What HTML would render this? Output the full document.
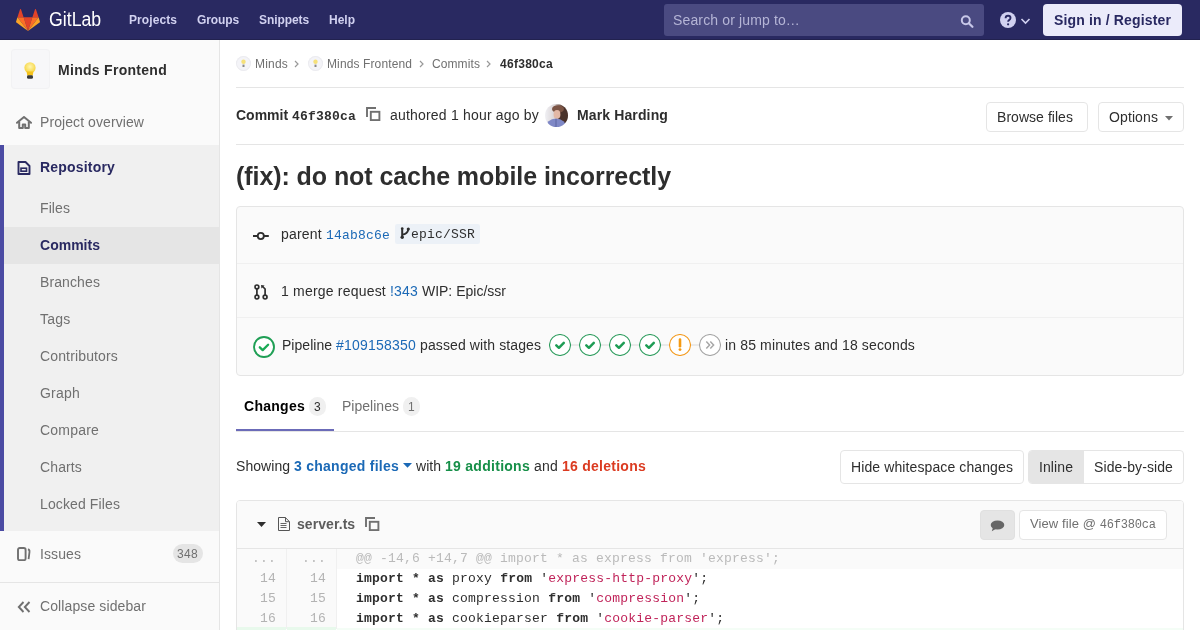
<!DOCTYPE html>
<html><head><meta charset="utf-8">
<style>
*{box-sizing:border-box;margin:0;padding:0}
html,body{width:1200px;height:630px;overflow:hidden;background:#fff;font-family:"Liberation Sans",sans-serif;font-size:14px;color:#2e2e2e}
.a{position:absolute;white-space:pre;font-size:0}
</style></head><body><div style="position:absolute;left:0;top:0;width:1200px;height:630px;will-change:transform">
<div class="a" style="left:0px;top:0px;width:1200px;height:40px;background:#292961"></div><div class="a" style="left:0px;top:39px;width:1200px;height:1px;background:#22224f"></div><svg class="a" style="left:16px;top:8px" width="24" height="23" viewBox="0 0 36 34.6"><path fill="#e24329" d="M18 34.5l6.6-20.4H11.4z"/><path fill="#fc6d26" d="M18 34.5l-6.6-20.4H2.1z"/><path fill="#fca326" d="M2.1 14.1l-2 6.2a1.4 1.4 0 0 0 .5 1.5L18 34.5z"/><path fill="#e24329" d="M2.1 14.1h9.3L7.4 1.8a.7.7 0 0 0-1.3 0z"/><path fill="#fc6d26" d="M18 34.5l6.6-20.4h9.3z"/><path fill="#fca326" d="M33.9 14.1l2 6.2a1.4 1.4 0 0 1-.5 1.5L18 34.5z"/><path fill="#e24329" d="M33.9 14.1h-9.3l4-12.3a.7.7 0 0 1 1.3 0z"/></svg><div class="a" style="left:49px;top:8px;transform:scaleX(0.885);transform-origin:0 0"><span style='font-family:"Liberation Sans",sans-serif;font-size:20px;font-weight:normal;letter-spacing:0.012px;color:#fff;'>GitLab</span></div><div class="a" style="left:129px;top:13px;"><span style='font-family:"Liberation Sans",sans-serif;font-size:12px;font-weight:bold;letter-spacing:0.081px;color:#d1d1f0;'>Projects</span></div><div class="a" style="left:197px;top:13px;"><span style='font-family:"Liberation Sans",sans-serif;font-size:12px;font-weight:bold;letter-spacing:-0.111px;color:#d1d1f0;'>Groups</span></div><div class="a" style="left:259px;top:13px;"><span style='font-family:"Liberation Sans",sans-serif;font-size:12px;font-weight:bold;letter-spacing:-0.084px;color:#d1d1f0;'>Snippets</span></div><div class="a" style="left:329px;top:13px;"><span style='font-family:"Liberation Sans",sans-serif;font-size:12px;font-weight:bold;letter-spacing:-0.001px;color:#d1d1f0;'>Help</span></div><div class="a" style="left:664px;top:4px;width:320px;height:32px;background:#4a4a81;border-radius:3px"></div><div class="a" style="left:673px;top:12px;"><span style='font-family:"Liberation Sans",sans-serif;font-size:14px;font-weight:normal;letter-spacing:0.139px;color:#b5b5d6;'>Search or jump to…</span></div><svg class="a" style="left:960px;top:15px" width="14" height="13" viewBox="0 0 14 13"><circle cx="5.8" cy="5.2" r="4" fill="none" stroke="#c7c7e8" stroke-width="2"/><path d="M8.8 8.2l3.6 3.6" stroke="#c7c7e8" stroke-width="2.2" stroke-linecap="round"/></svg><svg class="a" style="left:1000px;top:12px" width="16" height="16" viewBox="0 0 16 16"><circle cx="8" cy="8" r="8" fill="#d1d1f0"/><path d="M5.6 6.2c0-1.5 1-2.4 2.5-2.4s2.4.9 2.4 2.2c0 1.1-.6 1.6-1.4 2.1-.6.4-.9.7-.9 1.4v.3" fill="none" stroke="#292961" stroke-width="1.9"/><circle cx="8.1" cy="12.3" r="1.1" fill="#292961"/></svg><svg class="a" style="left:1020px;top:17px" width="11" height="8" viewBox="0 0 11 8"><path d="M1.5 2l4 4 4-4" fill="none" stroke="#d1d1f0" stroke-width="1.6"/></svg><div class="a" style="left:1043px;top:4px;width:139px;height:32px;background:#ebebfa;border-radius:4px"></div><div class="a" style="left:1054px;top:12px;"><span style='font-family:"Liberation Sans",sans-serif;font-size:14px;font-weight:bold;letter-spacing:0.147px;color:#292961;'>Sign in / Register</span></div><div class="a" style="left:0px;top:40px;width:220px;height:590px;background:#fafafa;border-right:1px solid #e5e5e5"></div><div class="a" style="left:11px;top:49px;width:39px;height:40px;background:#f7f7f9;border-radius:4px;box-shadow:0 0 0 1px #f2f2f4 inset"></div><svg class="a" style="left:22px;top:61px" width="16" height="20" viewBox="0 0 16 20"><defs><radialGradient id="gl" cx="50%" cy="40%" r="60%"><stop offset="0" stop-color="#fff6b0"/><stop offset="1" stop-color="#f6d23a"/></radialGradient></defs><circle cx="8" cy="6.8" r="5.6" fill="url(#gl)"/><path d="M4.6 10.5h6.8l-.6 4H5.2z" fill="#f5c21b"/><rect x="5" y="14.2" width="6" height="3.6" rx="1.4" fill="#3a3a3a"/></svg><div class="a" style="left:58px;top:62px;"><span style='font-family:"Liberation Sans",sans-serif;font-size:14px;font-weight:bold;letter-spacing:0.287px;color:#2e2e2e;'>Minds Frontend</span></div><svg class="a" style="left:16px;top:116px" width="16" height="13" viewBox="0 0 16 13"><path d="M1 6.8L8 1l7 5.8" fill="none" stroke="#707070" stroke-width="2" stroke-linejoin="round" stroke-linecap="round"/><path d="M3.2 5.5V12h3.6V8.6h2.4V12h3.6V5.5" fill="none" stroke="#707070" stroke-width="2" stroke-linejoin="round"/></svg><div class="a" style="left:40px;top:114px;"><span style='font-family:"Liberation Sans",sans-serif;font-size:14px;font-weight:normal;letter-spacing:0.081px;color:#707070;'>Project overview</span></div><div class="a" style="left:0px;top:145px;width:219px;height:386px;background:#f0f0f0"></div><div class="a" style="left:0px;top:145px;width:4px;height:386px;background:#4b4ba3"></div><svg class="a" style="left:17px;top:161px" width="14" height="14" viewBox="0 0 14 14"><path d="M1.5 1h7l4 4v8H1.5z" fill="none" stroke="#292961" stroke-width="1.9" stroke-linejoin="round"/><rect x="4" y="7.2" width="5.5" height="3" fill="none" stroke="#292961" stroke-width="1.6"/></svg><div class="a" style="left:40px;top:159px;"><span style='font-family:"Liberation Sans",sans-serif;font-size:14px;font-weight:bold;letter-spacing:0.188px;color:#292961;'>Repository</span></div><div class="a" style="left:4px;top:227px;width:215px;height:37px;background:#e5e5e5"></div><div class="a" style="left:40px;top:200px;"><span style='font-family:"Liberation Sans",sans-serif;font-size:14px;font-weight:normal;letter-spacing:0.088px;color:#707070;'>Files</span></div><div class="a" style="left:40px;top:237px;"><span style='font-family:"Liberation Sans",sans-serif;font-size:14px;font-weight:bold;letter-spacing:0.015px;color:#292961;'>Commits</span></div><div class="a" style="left:40px;top:274px;"><span style='font-family:"Liberation Sans",sans-serif;font-size:14px;font-weight:normal;letter-spacing:0.107px;color:#707070;'>Branches</span></div><div class="a" style="left:40px;top:311px;"><span style='font-family:"Liberation Sans",sans-serif;font-size:14px;font-weight:normal;letter-spacing:0.219px;color:#707070;'>Tags</span></div><div class="a" style="left:40px;top:348px;"><span style='font-family:"Liberation Sans",sans-serif;font-size:14px;font-weight:normal;letter-spacing:0.145px;color:#707070;'>Contributors</span></div><div class="a" style="left:40px;top:385px;"><span style='font-family:"Liberation Sans",sans-serif;font-size:14px;font-weight:normal;letter-spacing:0.218px;color:#707070;'>Graph</span></div><div class="a" style="left:40px;top:422px;"><span style='font-family:"Liberation Sans",sans-serif;font-size:14px;font-weight:normal;letter-spacing:0.203px;color:#707070;'>Compare</span></div><div class="a" style="left:40px;top:459px;"><span style='font-family:"Liberation Sans",sans-serif;font-size:14px;font-weight:normal;letter-spacing:0.128px;color:#707070;'>Charts</span></div><div class="a" style="left:40px;top:496px;"><span style='font-family:"Liberation Sans",sans-serif;font-size:14px;font-weight:normal;letter-spacing:0.117px;color:#707070;'>Locked Files</span></div><svg class="a" style="left:16px;top:547px" width="15" height="14" viewBox="0 0 15 14"><rect x="2" y="1" width="7.6" height="12.2" rx="1.8" fill="none" stroke="#707070" stroke-width="1.9"/><path d="M11.9 2.4c1.3.2 1.8.9 1.6 2.4l-.9 7.4" fill="none" stroke="#707070" stroke-width="1.8"/></svg><div class="a" style="left:40px;top:546px;"><span style='font-family:"Liberation Sans",sans-serif;font-size:14px;font-weight:normal;letter-spacing:0.090px;color:#707070;'>Issues</span></div><div class="a" style="left:173px;top:544px;width:30px;height:19px;background:#e5e5e5;border-radius:10px"></div><div class="a" style="left:177px;top:547px;"><span style='font-family:"Liberation Sans",sans-serif;font-size:12px;font-weight:normal;letter-spacing:0.326px;color:#707070;'>348</span></div><div class="a" style="left:0px;top:582px;width:219px;height:1px;background:#e5e5e5"></div><svg class="a" style="left:17px;top:601px" width="14" height="12" viewBox="0 0 14 12"><path d="M6.5 1L1.8 6l4.7 5M12.5 1L7.8 6l4.7 5" fill="none" stroke="#707070" stroke-width="1.9"/></svg><div class="a" style="left:40px;top:598px;"><span style='font-family:"Liberation Sans",sans-serif;font-size:14px;font-weight:normal;letter-spacing:0.107px;color:#707070;'>Collapse sidebar</span></div><div class="a" style="left:236px;top:56px;width:15px;height:15px;background:#f4f4f8;border-radius:50%;box-shadow:0 0 0 1px #ececf0 inset"></div><svg class="a" style="left:241px;top:59px" width="5" height="9" viewBox="0 0 5 9"><circle cx="2.5" cy="2.8" r="2.2" fill="#f5e07a"/><rect x="1.5" y="5.6" width="2" height="2.4" fill="#8a8a8a"/></svg><div class="a" style="left:255px;top:57px;"><span style='font-family:"Liberation Sans",sans-serif;font-size:12px;font-weight:normal;letter-spacing:0.198px;color:#707070;'>Minds</span></div><svg class="a" style="left:294px;top:60px" width="5" height="8" viewBox="0 0 5 8"><path d="M1 1l3 3-3 3" fill="none" stroke="#999" stroke-width="1.2"/></svg><div class="a" style="left:308px;top:56px;width:15px;height:15px;background:#f4f4f8;border-radius:50%;box-shadow:0 0 0 1px #ececf0 inset"></div><svg class="a" style="left:313px;top:59px" width="5" height="9" viewBox="0 0 5 9"><circle cx="2.5" cy="2.8" r="2.2" fill="#f5e07a"/><rect x="1.5" y="5.6" width="2" height="2.4" fill="#8a8a8a"/></svg><div class="a" style="left:327px;top:57px;"><span style='font-family:"Liberation Sans",sans-serif;font-size:12px;font-weight:normal;letter-spacing:0.116px;color:#707070;'>Minds Frontend</span></div><svg class="a" style="left:419px;top:60px" width="5" height="8" viewBox="0 0 5 8"><path d="M1 1l3 3-3 3" fill="none" stroke="#999" stroke-width="1.2"/></svg><div class="a" style="left:432px;top:57px;"><span style='font-family:"Liberation Sans",sans-serif;font-size:12px;font-weight:normal;letter-spacing:0.095px;color:#707070;'>Commits</span></div><svg class="a" style="left:486px;top:60px" width="5" height="8" viewBox="0 0 5 8"><path d="M1 1l3 3-3 3" fill="none" stroke="#999" stroke-width="1.2"/></svg><div class="a" style="left:500px;top:57px;"><span style='font-family:"Liberation Sans",sans-serif;font-size:12px;font-weight:bold;letter-spacing:0.286px;color:#2e2e2e;'>46f380ca</span></div><div class="a" style="left:236px;top:87px;width:948px;height:1px;background:#e5e5e5"></div><div class="a" style="left:236px;top:107px;"><span style='font-family:"Liberation Sans",sans-serif;font-size:14px;font-weight:bold;letter-spacing:0.000px;'>Commit </span><span style='font-family:"Liberation Mono",monospace;font-size:13px;font-weight:bold;letter-spacing:0.199px;'>46f380ca</span></div><svg class="a" style="left:366px;top:107px" width="15" height="14" viewBox="0 0 15 14"><path d="M1 10V1h9" fill="none" stroke="#707070" stroke-width="1.9"/><rect x="4.8" y="4.8" width="8.6" height="8.3" fill="none" stroke="#707070" stroke-width="1.9"/></svg><div class="a" style="left:390px;top:107px;"><span style='font-family:"Liberation Sans",sans-serif;font-size:14px;font-weight:normal;letter-spacing:0.192px;color:#2e2e2e;'>authored 1 hour ago by</span></div><svg class="a" style="left:545px;top:104px" width="23" height="23" viewBox="0 0 23 23"><defs><clipPath id="av"><circle cx="11.5" cy="11.5" r="11.5"/></clipPath><linearGradient id="avbg" x1="0" x2="1" y1="0" y2="0"><stop offset="0" stop-color="#f0f0f4"/><stop offset="0.45" stop-color="#d8d2d4"/><stop offset="0.75" stop-color="#5a3e34"/><stop offset="1" stop-color="#2a1c18"/></linearGradient><filter id="avb" x="-10%" y="-10%" width="120%" height="120%"><feGaussianBlur stdDeviation="0.55"/></filter></defs><g clip-path="url(#av)"><g filter="url(#avb)"><rect width="23" height="23" fill="url(#avbg)"/><ellipse cx="17.5" cy="11" rx="5.5" ry="9" fill="#4a3029"/><ellipse cx="13" cy="5" rx="6" ry="3.8" fill="#7b5444"/><ellipse cx="12" cy="10.5" rx="3.4" ry="4.4" fill="#e2b8a6"/><ellipse cx="11" cy="23.5" rx="10.5" ry="9" fill="#7f88c6"/><path d="M11 15v8" stroke="#5c64a0" stroke-width="1"/></g></g></svg><div class="a" style="left:577px;top:107px;"><span style='font-family:"Liberation Sans",sans-serif;font-size:14px;font-weight:bold;letter-spacing:0.128px;color:#2e2e2e;'>Mark Harding</span></div><div class="a" style="left:986px;top:102px;width:102px;height:30px;background:#fff;border:1px solid #e5e5e5;border-radius:4px"></div><div class="a" style="left:997px;top:109px;"><span style='font-family:"Liberation Sans",sans-serif;font-size:14px;font-weight:normal;letter-spacing:0.044px;color:#2e2e2e;'>Browse files</span></div><div class="a" style="left:1098px;top:102px;width:86px;height:30px;background:#fff;border:1px solid #e5e5e5;border-radius:4px"></div><div class="a" style="left:1109px;top:109px;"><span style='font-family:"Liberation Sans",sans-serif;font-size:14px;font-weight:normal;letter-spacing:0.107px;color:#2e2e2e;'>Options</span></div><svg class="a" style="left:1165px;top:116px" width="8" height="5" viewBox="0 0 8 5"><path d="M0 0h8L4 4.5z" fill="#707070"/></svg><div class="a" style="left:236px;top:144px;width:948px;height:1px;background:#e5e5e5"></div><div class="a" style="left:236px;top:162px;"><span style='font-family:"Liberation Sans",sans-serif;font-size:25px;font-weight:bold;letter-spacing:-0.068px;color:#2e2e2e;'>(fix): do not cache mobile incorrectly</span></div><div class="a" style="left:236px;top:206px;width:948px;height:170px;background:#fafafa;border:1px solid #e5e5e5;border-radius:4px"></div><div class="a" style="left:237px;top:263px;width:946px;height:1px;background:#f0f0f0"></div><div class="a" style="left:237px;top:317px;width:946px;height:1px;background:#f0f0f0"></div><svg class="a" style="left:252px;top:230px" width="18" height="12" viewBox="0 0 18 12"><path d="M1 6H5.8M11.8 6H16.8" stroke="#2e2e2e" stroke-width="2"/><circle cx="8.8" cy="6" r="3.05" fill="none" stroke="#2e2e2e" stroke-width="1.8"/></svg><div class="a" style="left:281px;top:226px;"><span style='font-family:"Liberation Sans",sans-serif;font-size:14px;font-weight:normal;letter-spacing:0.202px;color:#2e2e2e;'>parent </span><span style='font-family:"Liberation Mono",monospace;font-size:13px;font-weight:normal;letter-spacing:0.199px;color:#1b69b6;'>14ab8c6e</span></div><div class="a" style="left:395px;top:224px;width:85px;height:20px;background:#ecf1f7;border-radius:2px"></div><svg class="a" style="left:400px;top:227px" width="10" height="12" viewBox="0 0 10 12"><path d="M2.2 1.2v9" stroke="#2e2e2e" stroke-width="2"/><path d="M2.2 7.6c3.8-.2 5.6-2 6.2-5.6" fill="none" stroke="#2e2e2e" stroke-width="1.8"/><circle cx="2.2" cy="10.2" r="1.7" fill="#2e2e2e"/><circle cx="8.3" cy="2" r="1.6" fill="#2e2e2e"/><circle cx="2.2" cy="1.6" r="1.3" fill="#2e2e2e"/></svg><div class="a" style="left:411px;top:227px;"><span style='font-family:"Liberation Mono",monospace;font-size:13px;font-weight:normal;letter-spacing:0.199px;color:#2e2e2e;'>epic/SSR</span></div><svg class="a" style="left:254px;top:284px" width="14" height="16" viewBox="0 0 14 16"><circle cx="2.9" cy="2.9" r="1.9" fill="none" stroke="#2e2e2e" stroke-width="1.7"/><circle cx="2.9" cy="13.1" r="1.9" fill="none" stroke="#2e2e2e" stroke-width="1.7"/><circle cx="11.1" cy="13.1" r="1.9" fill="none" stroke="#2e2e2e" stroke-width="1.7"/><path d="M2.9 4.8v6.4M11.1 11.2V5L8.6 2.5" fill="none" stroke="#2e2e2e" stroke-width="1.7"/><path d="M7 1l3.6.4-3.2 3.2z" fill="#2e2e2e"/></svg><div class="a" style="left:281px;top:283px;"><span style='font-family:"Liberation Sans",sans-serif;font-size:14px;font-weight:normal;letter-spacing:0.198px;color:#2e2e2e;'>1 merge request </span><span style='font-family:"Liberation Sans",sans-serif;font-size:14px;font-weight:normal;letter-spacing:0.188px;color:#1b69b6;'>!343</span><span style='font-family:"Liberation Sans",sans-serif;font-size:14px;font-weight:normal;letter-spacing:0.007px;color:#2e2e2e;'> WIP: Epic/ssr</span></div><svg class="a" style="left:253px;top:336px" width="22" height="22" viewBox="0 0 22 22"><circle cx="11" cy="11" r="10" fill="#fff" stroke="#1f9f55" stroke-width="1.9"/><path d="M6.8 11.3l2.9 2.8 5.4-5.4" fill="none" stroke="#1aaa55" stroke-width="2.3" stroke-linecap="round" stroke-linejoin="round"/></svg><div class="a" style="left:282px;top:337px;"><span style='font-family:"Liberation Sans",sans-serif;font-size:14px;font-weight:normal;letter-spacing:0.033px;color:#2e2e2e;'>Pipeline </span><span style='font-family:"Liberation Sans",sans-serif;font-size:14px;font-weight:normal;letter-spacing:0.214px;color:#1b69b6;'>#109158350</span><span style='font-family:"Liberation Sans",sans-serif;font-size:14px;font-weight:normal;letter-spacing:0.107px;color:#2e2e2e;'> passed with stages</span></div><div class="a" style="left:570px;top:344px;width:130px;height:2px;background:#eaeaea"></div><svg class="a" style="left:549px;top:334px" width="22" height="22" viewBox="0 0 22 22"><circle cx="11" cy="11" r="10.5" fill="#fff" stroke="#2f9d5f" stroke-width="1.05"/><path d="M7.3 11.3l2.6 2.5 4.9-4.9" fill="none" stroke="#1f9d55" stroke-width="2.5" stroke-linecap="round" stroke-linejoin="round"/></svg><svg class="a" style="left:579px;top:334px" width="22" height="22" viewBox="0 0 22 22"><circle cx="11" cy="11" r="10.5" fill="#fff" stroke="#2f9d5f" stroke-width="1.05"/><path d="M7.3 11.3l2.6 2.5 4.9-4.9" fill="none" stroke="#1f9d55" stroke-width="2.5" stroke-linecap="round" stroke-linejoin="round"/></svg><svg class="a" style="left:609px;top:334px" width="22" height="22" viewBox="0 0 22 22"><circle cx="11" cy="11" r="10.5" fill="#fff" stroke="#2f9d5f" stroke-width="1.05"/><path d="M7.3 11.3l2.6 2.5 4.9-4.9" fill="none" stroke="#1f9d55" stroke-width="2.5" stroke-linecap="round" stroke-linejoin="round"/></svg><svg class="a" style="left:639px;top:334px" width="22" height="22" viewBox="0 0 22 22"><circle cx="11" cy="11" r="10.5" fill="#fff" stroke="#2f9d5f" stroke-width="1.05"/><path d="M7.3 11.3l2.6 2.5 4.9-4.9" fill="none" stroke="#1f9d55" stroke-width="2.5" stroke-linecap="round" stroke-linejoin="round"/></svg><svg class="a" style="left:669px;top:334px" width="22" height="22" viewBox="0 0 22 22"><circle cx="11" cy="11" r="10.5" fill="#fff" stroke="#f39a1e" stroke-width="1.05"/><path d="M11 5.6v6.6" stroke="#f59a12" stroke-width="2.6" stroke-linecap="round"/><circle cx="11" cy="15.6" r="1.45" fill="#f59a12"/></svg><svg class="a" style="left:699px;top:334px" width="22" height="22" viewBox="0 0 22 22"><circle cx="11" cy="11" r="10.5" fill="#fff" stroke="#a5a5a5" stroke-width="1.05"/><path d="M7.3 7.6l3.3 3.4-3.3 3.4M11.3 7.6l3.3 3.4-3.3 3.4" fill="none" stroke="#a7a7a7" stroke-width="1.5"/></svg><div class="a" style="left:725px;top:337px;"><span style='font-family:"Liberation Sans",sans-serif;font-size:14px;font-weight:normal;letter-spacing:0.142px;color:#2e2e2e;'>in 85 minutes and 18 seconds</span></div><div class="a" style="left:244px;top:398px;"><span style='font-family:"Liberation Sans",sans-serif;font-size:14px;font-weight:bold;letter-spacing:0.268px;color:#000;'>Changes</span></div><div class="a" style="left:309px;top:397px;width:17px;height:19px;background:#f0f0f0;border-radius:9px"></div><div class="a" style="left:314px;top:400px;"><span style='font-family:"Liberation Sans",sans-serif;font-size:12px;font-weight:normal;letter-spacing:0.326px;color:#2e2e2e;'>3</span></div><div class="a" style="left:342px;top:398px;"><span style='font-family:"Liberation Sans",sans-serif;font-size:14px;font-weight:normal;letter-spacing:0.021px;color:#707070;'>Pipelines</span></div><div class="a" style="left:403px;top:397px;width:17px;height:19px;background:#f0f0f0;border-radius:9px"></div><div class="a" style="left:408px;top:400px;"><span style='font-family:"Liberation Sans",sans-serif;font-size:12px;font-weight:normal;letter-spacing:0.326px;color:#707070;'>1</span></div><div class="a" style="left:236px;top:431px;width:948px;height:1px;background:#e5e5e5"></div><div class="a" style="left:236px;top:429px;width:98px;height:2px;background:#6b6bb8"></div><div class="a" style="left:236px;top:458px;"><span style='font-family:"Liberation Sans",sans-serif;font-size:14px;font-weight:normal;letter-spacing:0.051px;color:#2e2e2e;'>Showing </span><span style='font-family:"Liberation Sans",sans-serif;font-size:14px;font-weight:bold;letter-spacing:0.257px;color:#1b69b6;'>3 changed files</span></div><svg class="a" style="left:403px;top:463px" width="9" height="5" viewBox="0 0 9 5"><path d="M0 0h9L4.5 4.8z" fill="#1b69b6"/></svg><div class="a" style="left:416px;top:458px;"><span style='font-family:"Liberation Sans",sans-serif;font-size:14px;font-weight:normal;letter-spacing:0.043px;color:#2e2e2e;'>with </span><span style='font-family:"Liberation Sans",sans-serif;font-size:14px;font-weight:bold;letter-spacing:0.276px;color:#168f48;'>19 additions</span><span style='font-family:"Liberation Sans",sans-serif;font-size:14px;font-weight:normal;letter-spacing:0.172px;color:#2e2e2e;'> and </span><span style='font-family:"Liberation Sans",sans-serif;font-size:14px;font-weight:bold;letter-spacing:0.257px;color:#db3b21;'>16 deletions</span></div><div class="a" style="left:840px;top:450px;width:184px;height:34px;background:#fff;border:1px solid #e5e5e5;border-radius:4px"></div><div class="a" style="left:851px;top:459px;"><span style='font-family:"Liberation Sans",sans-serif;font-size:14px;font-weight:normal;letter-spacing:0.107px;color:#2e2e2e;'>Hide whitespace changes</span></div><div class="a" style="left:1028px;top:450px;width:156px;height:34px;background:#fff;border:1px solid #e5e5e5;border-radius:4px"></div><div class="a" style="left:1029px;top:451px;width:55px;height:32px;background:#e5e5e5;border-radius:3px 0 0 3px"></div><div class="a" style="left:1039px;top:459px;"><span style='font-family:"Liberation Sans",sans-serif;font-size:14px;font-weight:normal;letter-spacing:0.089px;color:#2e2e2e;'>Inline</span></div><div class="a" style="left:1094px;top:459px;"><span style='font-family:"Liberation Sans",sans-serif;font-size:14px;font-weight:normal;letter-spacing:0.099px;color:#2e2e2e;'>Side-by-side</span></div><div class="a" style="left:236px;top:500px;width:948px;height:140px;background:#fff;border:1px solid #e5e5e5;border-radius:4px 4px 0 0"></div><div class="a" style="left:237px;top:501px;width:946px;height:47px;background:#fafafa;border-radius:3px 3px 0 0"></div><div class="a" style="left:237px;top:548px;width:946px;height:1px;background:#e5e5e5"></div><svg class="a" style="left:257px;top:522px" width="9" height="5" viewBox="0 0 9 5"><path d="M0 0h9L4.5 5z" fill="#2e2e2e"/></svg><svg class="a" style="left:277px;top:517px" width="13" height="14" viewBox="0 0 13 14"><path d="M1.5 .5h6.8l4.2 4.2v8.8h-11z" fill="none" stroke="#555" stroke-width="1" stroke-linejoin="round"/><path d="M8.5 .5v4.2h4" fill="none" stroke="#555" stroke-width="1"/><path d="M3.5 6.5h6M3.5 8.5h6M3.5 10.5h6" fill="none" stroke="#666" stroke-width="1"/></svg><div class="a" style="left:297px;top:516px;"><span style='font-family:"Liberation Sans",sans-serif;font-size:14px;font-weight:bold;letter-spacing:0.069px;color:#5c5c5c;'>server.ts</span></div><svg class="a" style="left:365px;top:517px" width="15" height="14" viewBox="0 0 15 14"><path d="M1 10V1h9" fill="none" stroke="#707070" stroke-width="1.9"/><rect x="4.8" y="4.8" width="8.6" height="8.3" fill="none" stroke="#707070" stroke-width="1.9"/></svg><div class="a" style="left:980px;top:510px;width:35px;height:30px;background:#e5e5e5;border:1px solid #e0e0e0;border-radius:4px"></div><svg class="a" style="left:990px;top:520px" width="15" height="12" viewBox="0 0 15 12"><ellipse cx="7.5" cy="5" rx="6.8" ry="4.6" fill="#666"/><path d="M3 7.5L1.8 11.2 6.5 8.5z" fill="#666"/></svg><div class="a" style="left:1019px;top:510px;width:148px;height:30px;background:#fff;border:1px solid #e5e5e5;border-radius:4px"></div><div class="a" style="left:1030px;top:516px;"><span style='font-family:"Liberation Sans",sans-serif;font-size:13px;font-weight:normal;letter-spacing:0.098px;color:#707070;'>View file @ </span><span style='font-family:"Liberation Mono",monospace;font-size:12px;font-weight:normal;letter-spacing:-0.201px;color:#707070;'>46f380ca</span></div><div class="a" style="left:237px;top:549px;width:50px;height:80px;background:#fafafa;border-right:1px solid #f0f0f0"></div><div class="a" style="left:287px;top:549px;width:50px;height:80px;background:#fafafa;border-right:1px solid #f0f0f0"></div><div class="a" style="left:337px;top:549px;width:846px;height:20px;background:#fafafa"></div><div class="a" style="left:337px;top:628px;width:846px;height:2px;background:#f4fdf6"></div><div class="a" style="left:237px;top:627px;width:49px;height:3px;background:#e8f9ec"></div><div class="a" style="left:287px;top:627px;width:49px;height:3px;background:#e8f9ec"></div><div class="a" style="left:252px;top:551px;"><span style='font-family:"Liberation Mono",monospace;font-size:13px;font-weight:normal;letter-spacing:0.199px;color:#bababa;'>...</span></div><div class="a" style="left:302px;top:551px;"><span style='font-family:"Liberation Mono",monospace;font-size:13px;font-weight:normal;letter-spacing:0.199px;color:#bababa;'>...</span></div><div class="a" style="left:356px;top:551px;"><span style='font-family:"Liberation Mono",monospace;font-size:13px;font-weight:normal;letter-spacing:0.199px;color:#bababa;'>@@ -14,6 +14,7 @@ import * as express from &#x27;express&#x27;;</span></div><div class="a" style="left:260px;top:571px;"><span style='font-family:"Liberation Mono",monospace;font-size:13px;font-weight:normal;letter-spacing:0.199px;color:#b3b3b3;'>14</span></div><div class="a" style="left:310px;top:571px;"><span style='font-family:"Liberation Mono",monospace;font-size:13px;font-weight:normal;letter-spacing:0.199px;color:#b3b3b3;'>14</span></div><div class="a" style="left:356px;top:571px;"><span style='font-family:"Liberation Mono",monospace;font-size:13px;font-weight:bold;letter-spacing:0.199px;color:#2e2e2e;'>import</span><span style='font-family:"Liberation Mono",monospace;font-size:13px;font-weight:normal;letter-spacing:0.199px;color:#2e2e2e;'> </span><span style='font-family:"Liberation Mono",monospace;font-size:13px;font-weight:bold;letter-spacing:0.199px;color:#2e2e2e;'>*</span><span style='font-family:"Liberation Mono",monospace;font-size:13px;font-weight:normal;letter-spacing:0.199px;color:#2e2e2e;'> </span><span style='font-family:"Liberation Mono",monospace;font-size:13px;font-weight:bold;letter-spacing:0.199px;color:#2e2e2e;'>as</span><span style='font-family:"Liberation Mono",monospace;font-size:13px;font-weight:normal;letter-spacing:0.199px;color:#2e2e2e;'> </span><span style='font-family:"Liberation Mono",monospace;font-size:13px;font-weight:normal;letter-spacing:0.199px;color:#2e2e2e;'>proxy</span><span style='font-family:"Liberation Mono",monospace;font-size:13px;font-weight:normal;letter-spacing:0.199px;color:#2e2e2e;'> </span><span style='font-family:"Liberation Mono",monospace;font-size:13px;font-weight:bold;letter-spacing:0.199px;color:#2e2e2e;'>from</span><span style='font-family:"Liberation Mono",monospace;font-size:13px;font-weight:normal;letter-spacing:0.199px;color:#2e2e2e;'> </span><span style='font-family:"Liberation Mono",monospace;font-size:13px;font-weight:normal;letter-spacing:0.199px;color:#2e2e2e;'>&#x27;</span><span style='font-family:"Liberation Mono",monospace;font-size:13px;font-weight:normal;letter-spacing:0.199px;color:#c0245a;'>express-http-proxy</span><span style='font-family:"Liberation Mono",monospace;font-size:13px;font-weight:normal;letter-spacing:0.199px;color:#2e2e2e;'>&#x27;</span><span style='font-family:"Liberation Mono",monospace;font-size:13px;font-weight:normal;letter-spacing:0.199px;color:#2e2e2e;'>;</span></div><div class="a" style="left:260px;top:591px;"><span style='font-family:"Liberation Mono",monospace;font-size:13px;font-weight:normal;letter-spacing:0.199px;color:#b3b3b3;'>15</span></div><div class="a" style="left:310px;top:591px;"><span style='font-family:"Liberation Mono",monospace;font-size:13px;font-weight:normal;letter-spacing:0.199px;color:#b3b3b3;'>15</span></div><div class="a" style="left:356px;top:591px;"><span style='font-family:"Liberation Mono",monospace;font-size:13px;font-weight:bold;letter-spacing:0.199px;color:#2e2e2e;'>import</span><span style='font-family:"Liberation Mono",monospace;font-size:13px;font-weight:normal;letter-spacing:0.199px;color:#2e2e2e;'> </span><span style='font-family:"Liberation Mono",monospace;font-size:13px;font-weight:bold;letter-spacing:0.199px;color:#2e2e2e;'>*</span><span style='font-family:"Liberation Mono",monospace;font-size:13px;font-weight:normal;letter-spacing:0.199px;color:#2e2e2e;'> </span><span style='font-family:"Liberation Mono",monospace;font-size:13px;font-weight:bold;letter-spacing:0.199px;color:#2e2e2e;'>as</span><span style='font-family:"Liberation Mono",monospace;font-size:13px;font-weight:normal;letter-spacing:0.199px;color:#2e2e2e;'> </span><span style='font-family:"Liberation Mono",monospace;font-size:13px;font-weight:normal;letter-spacing:0.199px;color:#2e2e2e;'>compression</span><span style='font-family:"Liberation Mono",monospace;font-size:13px;font-weight:normal;letter-spacing:0.199px;color:#2e2e2e;'> </span><span style='font-family:"Liberation Mono",monospace;font-size:13px;font-weight:bold;letter-spacing:0.199px;color:#2e2e2e;'>from</span><span style='font-family:"Liberation Mono",monospace;font-size:13px;font-weight:normal;letter-spacing:0.199px;color:#2e2e2e;'> </span><span style='font-family:"Liberation Mono",monospace;font-size:13px;font-weight:normal;letter-spacing:0.199px;color:#2e2e2e;'>&#x27;</span><span style='font-family:"Liberation Mono",monospace;font-size:13px;font-weight:normal;letter-spacing:0.199px;color:#c0245a;'>compression</span><span style='font-family:"Liberation Mono",monospace;font-size:13px;font-weight:normal;letter-spacing:0.199px;color:#2e2e2e;'>&#x27;</span><span style='font-family:"Liberation Mono",monospace;font-size:13px;font-weight:normal;letter-spacing:0.199px;color:#2e2e2e;'>;</span></div><div class="a" style="left:260px;top:611px;"><span style='font-family:"Liberation Mono",monospace;font-size:13px;font-weight:normal;letter-spacing:0.199px;color:#b3b3b3;'>16</span></div><div class="a" style="left:310px;top:611px;"><span style='font-family:"Liberation Mono",monospace;font-size:13px;font-weight:normal;letter-spacing:0.199px;color:#b3b3b3;'>16</span></div><div class="a" style="left:356px;top:611px;"><span style='font-family:"Liberation Mono",monospace;font-size:13px;font-weight:bold;letter-spacing:0.199px;color:#2e2e2e;'>import</span><span style='font-family:"Liberation Mono",monospace;font-size:13px;font-weight:normal;letter-spacing:0.199px;color:#2e2e2e;'> </span><span style='font-family:"Liberation Mono",monospace;font-size:13px;font-weight:bold;letter-spacing:0.199px;color:#2e2e2e;'>*</span><span style='font-family:"Liberation Mono",monospace;font-size:13px;font-weight:normal;letter-spacing:0.199px;color:#2e2e2e;'> </span><span style='font-family:"Liberation Mono",monospace;font-size:13px;font-weight:bold;letter-spacing:0.199px;color:#2e2e2e;'>as</span><span style='font-family:"Liberation Mono",monospace;font-size:13px;font-weight:normal;letter-spacing:0.199px;color:#2e2e2e;'> </span><span style='font-family:"Liberation Mono",monospace;font-size:13px;font-weight:normal;letter-spacing:0.199px;color:#2e2e2e;'>cookieparser</span><span style='font-family:"Liberation Mono",monospace;font-size:13px;font-weight:normal;letter-spacing:0.199px;color:#2e2e2e;'> </span><span style='font-family:"Liberation Mono",monospace;font-size:13px;font-weight:bold;letter-spacing:0.199px;color:#2e2e2e;'>from</span><span style='font-family:"Liberation Mono",monospace;font-size:13px;font-weight:normal;letter-spacing:0.199px;color:#2e2e2e;'> </span><span style='font-family:"Liberation Mono",monospace;font-size:13px;font-weight:normal;letter-spacing:0.199px;color:#2e2e2e;'>&#x27;</span><span style='font-family:"Liberation Mono",monospace;font-size:13px;font-weight:normal;letter-spacing:0.199px;color:#c0245a;'>cookie-parser</span><span style='font-family:"Liberation Mono",monospace;font-size:13px;font-weight:normal;letter-spacing:0.199px;color:#2e2e2e;'>&#x27;</span><span style='font-family:"Liberation Mono",monospace;font-size:13px;font-weight:normal;letter-spacing:0.199px;color:#2e2e2e;'>;</span></div></div></body></html>
